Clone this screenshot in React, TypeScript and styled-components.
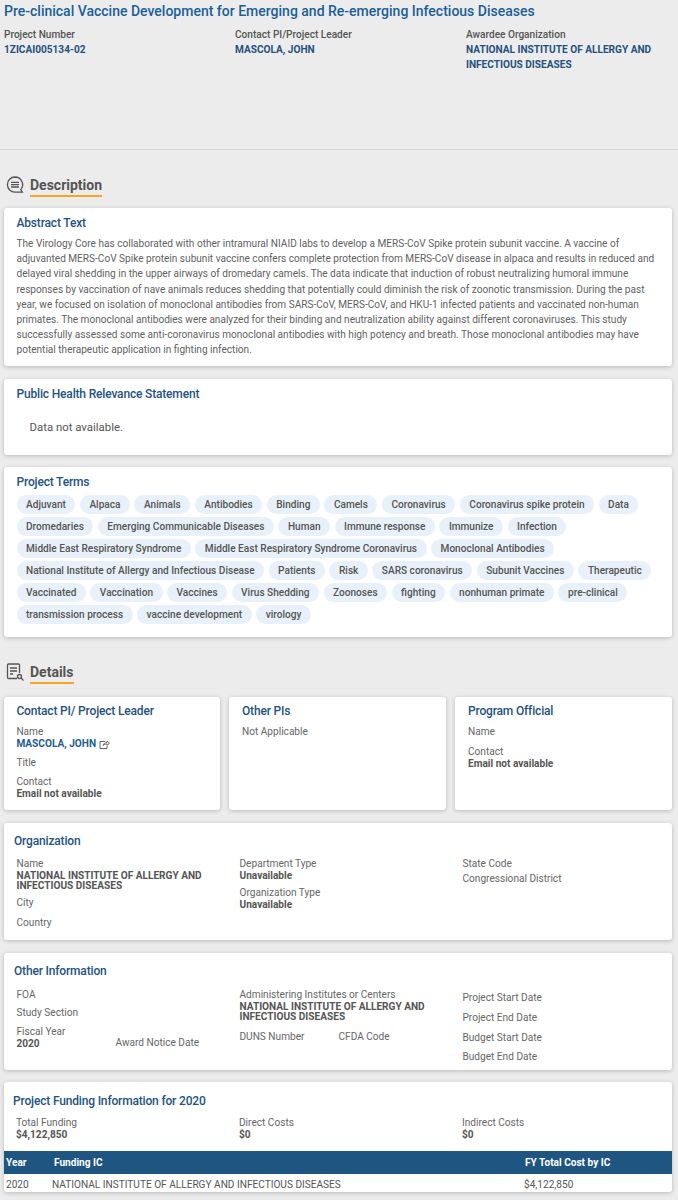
import React from 'react';
import styled, { createGlobalStyle } from 'styled-components';

const GlobalStyle = createGlobalStyle`
  html, body {
    margin: 0;
    padding: 0;
    background: #ececec;
    font-family: Roboto, "Liberation Sans", sans-serif;
    color: #555;
    overflow: hidden;
  }
`;

const Page = styled.div`
  width: 678px;
  height: 1200px;
  overflow: hidden;
`;

const Header = styled.header`
  height: 150px;
  box-sizing: border-box;
  padding: 2px 4px 0;
  border-bottom: 1px solid #d8d8d8;
`;

const Title = styled.h1`
  margin: 0 0 7px;
  font-size: 14px;
  line-height: 18px;
  font-weight: 500;
  color: #1a5e9a;
`;

const HeaderGrid = styled.div`
  display: grid;
  grid-template-columns: 231px 231px 1fr;
  font-size: 10.1px;
  line-height: 15px;
  font-weight: 500;
`;

const HeaderValue = styled.div`
  color: #24527f;
  font-weight: 700;
`;

const Section = styled.div<{ $top: number; $height: number }>`
  display: flex;
  align-items: flex-start;
  gap: 5px;
  height: ${(p) => p.$height}px;
  margin-top: ${(p) => p.$top}px;
  padding-left: 5px;
`;

const SectionName = styled.h2`
  margin: 0;
  font-size: 14px;
  line-height: 20px;
  font-weight: 700;
  color: #555;
  border-bottom: 2px solid #f5a623;
`;

const Card = styled.section<{ $height: number; $pad?: number; $top?: number }>`
  box-sizing: border-box;
  height: ${(p) => p.$height}px;
  margin: 0 6px 12.5px 4px;
  padding: ${(p) => p.$top ?? 8}px ${(p) => p.$pad ?? 12.5}px 0;
  background: #fff;
  border-radius: 3px;
  box-shadow: 0 1px 4px rgba(0, 0, 0, 0.22);
`;

const CardTitle = styled.h3<{ $gap?: number }>`
  margin: 0 0 ${(p) => p.$gap ?? 5}px;
  font-size: 12px;
  letter-spacing: -0.17px;
  line-height: 15px;
  font-weight: 500;
  color: #24527f;
`;

const Abstract = styled.p`
  margin: 0;
  font-size: 10.08px;
  line-height: 15.2px;
  color: #5f5f5f;
`;

const NoData = styled.p`
  margin: 17px 0 0 13px;
  font-size: 11.4px;
  line-height: 16px;
  color: #555;
`;

const Terms = styled.div`
  display: flex;
  flex-wrap: wrap;
  gap: 3px 4.5px;
`;

const Term = styled.span`
  display: block;
  height: 19px;
  padding: 0 9.5px;
  border-radius: 10px;
  background: #e8f1f9;
  font-size: 10.1px;
  line-height: 19px;
  font-weight: 500;
  color: #555;
`;

const ThreeCards = styled.div`
  display: grid;
  grid-template-columns: 216px 217px 217px;
  gap: 9px;
  margin: 0 6px 0 4px;
`;

const SmallCard = styled(Card)`
  margin: 0 0 12.5px;
  padding: 7px 13px 0;

  &:first-child {
    padding-left: 12.4px;
  }
`;

const Label = styled.div<{ $gap?: number }>`
  font-size: 10.1px;
  line-height: 12px;
  color: #666;
  margin-bottom: ${(p) => p.$gap ?? 0}px;
`;

const BottomLabel = styled(Label)`
  align-self: end;
  margin-bottom: 5.5px;
`;

const Value = styled.div<{ $gap?: number }>`
  margin-top: 1.4px;
  font-size: 10.1px;
  line-height: 10.5px;
  font-weight: 700;
  color: #555;
  margin-bottom: ${(p) => p.$gap ?? 5}px;
`;

const NameLink = styled.div`
  display: flex;
  align-items: center;
  gap: 3px;
  margin-bottom: 7px;
  font-size: 10.1px;
  line-height: 12px;
  font-weight: 700;
  color: #1f5c91;
`;

const Columns = styled.div<{ $indent?: number }>`
  display: grid;
  grid-template-columns: 223px 223px 1fr;
  padding-left: ${(p) => p.$indent ?? 2.5}px;
`;

const DateColumn = styled.div`
  padding-top: 3px;
`;

const Pair = styled.div`
  display: grid;
  grid-template-columns: 99px 1fr;
`;

const Funding = styled.table`
  width: 100%;
  border-collapse: collapse;
  font-size: 10.1px;
`;

const FundingCard = styled(Card)`
  padding: 12px 0 0;
`;

const FundingHead = styled.div`
  height: 57px;
  padding: 0 9px;
`;

const Th = styled.th<{ $width?: number }>`
  height: 23px;
  padding: 0 2px;
  background: #1e5581;
  color: #fff;
  text-align: left;
  font-weight: 700;
  width: ${(p) => (p.$width ? `${p.$width}px` : 'auto')};
`;

const Td = styled.td<{ $left: number }>`
  height: 18px;
  padding: 1px 0 0 ${(p) => p.$left}px;
  color: #555;
`;

const DescriptionIcon = () => (
  <svg width="20" height="20" viewBox="0 0 20 20" fill="none" stroke="#555" strokeWidth="1.3">
    <path d="M10 2a7.6 7.6 0 1 0 0 15.2h7.4l-1.7-2.6A7.6 7.6 0 0 0 10 2z" />
    <path d="M6 7.4h8M6 9.7h8M6 12h8" />
  </svg>
);

const DetailsIcon = () => (
  <svg width="20" height="20" viewBox="0 0 20 20" fill="none" stroke="#555" strokeWidth="1.3">
    <path d="M12 16.5H3.5a1 1 0 0 1-1-1V3a1 1 0 0 1 1-1h10a1 1 0 0 1 1 1v8" />
    <path d="M5 6h7M5 9h7M5 12h3" />
    <circle cx="14.5" cy="14.5" r="2" />
    <path d="M16 16l2.5 2.5" />
  </svg>
);

const ExternalIcon = () => (
  <svg width="11" height="9" viewBox="0 0 11 9" fill="none" stroke="#555" strokeWidth="0.9">
    <path d="M6 1.5H1v7h7V6" />
    <path d="M4 5.5C4.5 3.5 6 2.5 8 2.5V1l2.5 2.2L8 5.2V4C6.3 4 5 4.5 4 5.5z" />
  </svg>
);

const terms = [
  'Adjuvant', 'Alpaca', 'Animals', 'Antibodies', 'Binding', 'Camels', 'Coronavirus',
  'Coronavirus spike protein', 'Data', 'Dromedaries', 'Emerging Communicable Diseases',
  'Human', 'Immune response', 'Immunize', 'Infection', 'Middle East Respiratory Syndrome',
  'Middle East Respiratory Syndrome Coronavirus', 'Monoclonal Antibodies',
  'National Institute of Allergy and Infectious Disease', 'Patients', 'Risk', 'SARS coronavirus',
  'Subunit Vaccines', 'Therapeutic', 'Vaccinated', 'Vaccination', 'Vaccines', 'Virus Shedding',
  'Zoonoses', 'fighting', 'nonhuman primate', 'pre-clinical', 'transmission process',
  'vaccine development', 'virology',
];

const NIAID = 'NATIONAL INSTITUTE OF ALLERGY AND INFECTIOUS DISEASES';

export default function App() {
  return (
    <Page>
      <GlobalStyle />
      <Header>
        <Title>Pre-clinical Vaccine Development for Emerging and Re-emerging Infectious Diseases</Title>
        <HeaderGrid>
          <div>Project Number<HeaderValue>1ZICAI005134-02</HeaderValue></div>
          <div>Contact PI/Project Leader<HeaderValue>MASCOLA, JOHN</HeaderValue></div>
          <div>Awardee Organization<HeaderValue>{NIAID}</HeaderValue></div>
        </HeaderGrid>
      </Header>

      <Section $top={25} $height={33}>
        <DescriptionIcon />
        <SectionName>Description</SectionName>
      </Section>

      <Card $height={158}>
        <CardTitle>Abstract Text</CardTitle>
        <Abstract>
          The Virology Core has collaborated with other intramural NIAID labs to develop a MERS-CoV Spike protein subunit vaccine. A vaccine of adjuvanted MERS-CoV Spike protein subunit vaccine confers complete protection from MERS-CoV disease in alpaca and results in reduced and delayed viral shedding in the upper airways of dromedary camels. The data indicate that induction of robust neutralizing humoral immune responses by vaccination of nave animals reduces shedding that potentially could diminish the risk of zoonotic transmission. During the past year, we focused on isolation of monoclonal antibodies from SARS-CoV, MERS-CoV, and HKU-1 infected patients and vaccinated non-human primates. The monoclonal antibodies were analyzed for their binding and neutralization ability against different coronaviruses. This study successfully assessed some anti-coronavirus monoclonal antibodies with high potency and breath. Those monoclonal antibodies may have potential therapeutic application in fighting infection.
        </Abstract>
      </Card>

      <Card $height={76}>
        <CardTitle $gap={4}>Public Health Relevance Statement</CardTitle>
        <NoData>Data not available.</NoData>
      </Card>

      <Card $height={170}>
        <CardTitle>Project Terms</CardTitle>
        <Terms>
          {terms.map((t) => <Term key={t}>{t}</Term>)}
        </Terms>
      </Card>

      <Section $top={25} $height={35}>
        <DetailsIcon />
        <SectionName>Details</SectionName>
      </Section>

      <ThreeCards>
        <SmallCard $height={113}>
          <CardTitle $gap={7}>Contact PI/ Project Leader</CardTitle>
          <Label>Name</Label>
          <NameLink>MASCOLA, JOHN <ExternalIcon /></NameLink>
          <Label $gap={7}>Title</Label>
          <Label>Contact</Label>
          <Value>Email not available</Value>
        </SmallCard>
        <SmallCard $height={113}>
          <CardTitle $gap={7}>Other PIs</CardTitle>
          <Label>Not Applicable</Label>
        </SmallCard>
        <SmallCard $height={113}>
          <CardTitle $gap={7}>Program Official</CardTitle>
          <Label $gap={8}>Name</Label>
          <Label>Contact</Label>
          <Value>Email not available</Value>
        </SmallCard>
      </ThreeCards>

      <Card $height={117.5} $pad={10} $top={11}>
        <CardTitle $gap={9}>Organization</CardTitle>
        <Columns>
          <div>
            <Label>Name</Label>
            <Value>NATIONAL INSTITUTE OF ALLERGY AND<br />INFECTIOUS DISEASES</Value>
            <Label $gap={8}>City</Label>
            <Label>Country</Label>
          </div>
          <div>
            <Label>Department Type</Label>
            <Value $gap={5.5}>Unavailable</Value>
            <Label>Organization Type</Label>
            <Value>Unavailable</Value>
          </div>
          <div>
            <Label $gap={3}>State Code</Label>
            <Label>Congressional District</Label>
          </div>
        </Columns>
      </Card>

      <Card $height={117} $pad={10} $top={11}>
        <CardTitle $gap={10}>Other Information</CardTitle>
        <Columns>
          <div>
            <Label $gap={6}>FOA</Label>
            <Label $gap={7}>Study Section</Label>
            <Pair>
              <div><Label>Fiscal Year</Label><Value>2020</Value></div>
              <BottomLabel>Award Notice Date</BottomLabel>
            </Pair>
          </div>
          <div>
            <Label>Administering Institutes or Centers</Label>
            <Value $gap={8}>NATIONAL INSTITUTE OF ALLERGY AND<br />INFECTIOUS DISEASES</Value>
            <Pair>
              <Label>DUNS Number</Label>
              <Label>CFDA Code</Label>
            </Pair>
          </div>
          <DateColumn>
            <Label $gap={8}>Project Start Date</Label>
            <Label $gap={8}>Project End Date</Label>
            <Label $gap={7}>Budget Start Date</Label>
            <Label>Budget End Date</Label>
          </DateColumn>
        </Columns>
      </Card>

      <FundingCard $height={110}>
        <FundingHead>
          <CardTitle $gap={8}>Project Funding Information for 2020</CardTitle>
          <Columns $indent={3}>
            <div><Label>Total Funding</Label><Value>$4,122,850</Value></div>
            <div><Label>Direct Costs</Label><Value>$0</Value></div>
            <div><Label>Indirect Costs</Label><Value>$0</Value></div>
          </Columns>
        </FundingHead>
        <Funding>
          <thead>
            <tr>
              <Th $width={44}>Year</Th>
              <Th>Funding IC</Th>
              <Th $width={145}>FY Total Cost by IC</Th>
            </tr>
          </thead>
          <tbody>
            <tr>
              <Td $left={2}>2020</Td>
              <Td $left={0}>NATIONAL INSTITUTE OF ALLERGY AND INFECTIOUS DISEASES</Td>
              <Td $left={1}>$4,122,850</Td>
            </tr>
          </tbody>
        </Funding>
      </FundingCard>
    </Page>
  );
}
